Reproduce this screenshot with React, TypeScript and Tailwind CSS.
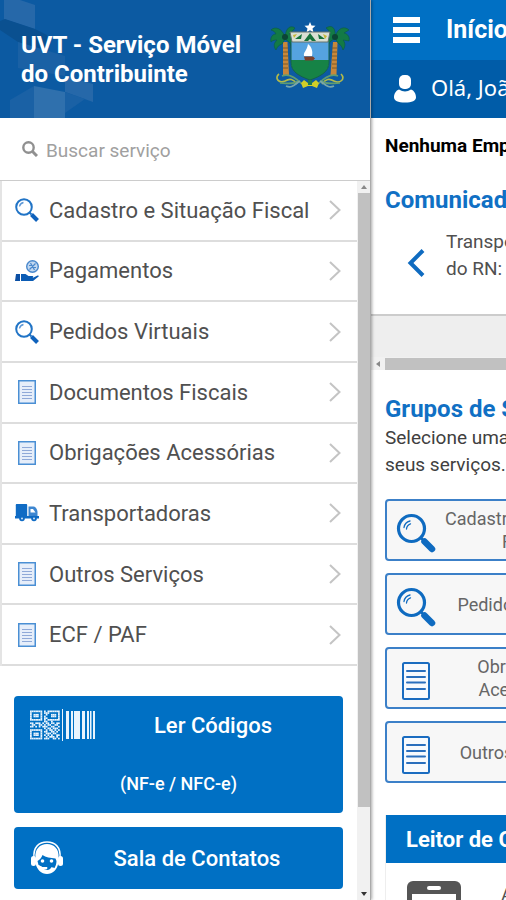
import React from 'react';

type IconProps = { className?: string };

const MagnifierIcon = ({ className }: IconProps) => (
  <svg className={className} viewBox="0 0 40 40" fill="none" aria-hidden="true">
    <circle cx="15.5" cy="15.5" r="13" stroke="#0f6bc0" strokeWidth="3.2" />
    <path d="M8 14.500a8 8 0 0 1 6-6.500M10.500 16a6 6 0 0 1 4-5.200" stroke="#0f6bc0" strokeWidth="1.300" strokeLinecap="round" />
    <path d="M24.500 24.500l3 3" stroke="#0f6bc0" strokeWidth="2.500" />
    <path d="M28.500 28.500l7.500 7.500" stroke="#0f6bc0" strokeWidth="6.500" strokeLinecap="round" />
  </svg>
);

const SmallMagnifierIcon = () => (
  <svg className="size-6" viewBox="0 0 24 24" fill="none" aria-hidden="true">
    <circle cx="9" cy="9" r="7.800" stroke="#2174c6" strokeWidth="2" />
    <path d="M4.500 8.500a5 5 0 0 1 4-4" stroke="#5c97d6" strokeWidth="1.300" />
    <path d="M14.500 14.500l2 2" stroke="#2174c6" strokeWidth="2" />
    <path d="M16.500 16.500l6 6" stroke="#0f62bc" strokeWidth="4" />
  </svg>
);

const DocumentIcon = ({ className }: IconProps) => (
  <svg className={className} viewBox="0 0 28 38" fill="none" aria-hidden="true">
    <rect x="1" y="1" width="26" height="36" rx="1.500" fill="#f8fafd" stroke="#1a6cc0" strokeWidth="2" />
    <path d="M5 9h18M5 15h18M5 20.500h18M5 27h18" stroke="#2a6fbd" strokeWidth="2" strokeLinecap="round" />
  </svg>
);

const SmallDocumentIcon = () => (
  <svg className="h-6 w-[18px]" viewBox="0 0 18 24" fill="none" aria-hidden="true">
    <rect x=".75" y=".75" width="16.500" height="22.500" fill="#e6eefa" stroke="#4a8fd4" strokeWidth="1.500" />
    <path d="M4 6.500h10M4 9.500h10M4 12.500h10M4 15.500h10M4 18.500h10" stroke="#8fa9d8" />
  </svg>
);

const PaymentIcon = () => (
  <svg className="size-6" viewBox="0 0 24 24" fill="none" aria-hidden="true">
    <circle cx="17.500" cy="7.500" r="5.800" fill="#c2d8f0" stroke="#4a88cc" strokeWidth="1.400" />
    <path d="M14.500 10.500l6-6M14 6.500h2.500M18.500 8.500H21M15.500 4l4 7" stroke="#4a88cc" strokeWidth="1.200" />
    <path d="M1 15h4v7H0z" fill="#0b4fa4" />
    <path d="M6 15h4.500l3 2h4c1 0 1 1.700 0 1.700h-4.500 5l4.500-2.200c1.300-.4 1.700.6.800 1.300L18 22H6z" fill="#0b5cb4" />
  </svg>
);

const TruckIcon = () => (
  <svg className="h-[18px] w-6" viewBox="0 0 24 18" aria-hidden="true">
    <path d="M1.500 0H11c.8 0 1.200.4 1.200 1.200V13H.8V1.200C.8.4 1 0 1.500 0z" fill="#0f6bc4" />
    <path d="M13.500 2.500h5c2 0 4 3 4 5.500v6h-9z" fill="#3d86d0" />
    <path d="M15.500 5h2.500l2.500 3.500h-5z" fill="#fff" />
    <path d="M0 12h24v2.500H0z" fill="#0f6bc4" />
    <circle cx="7" cy="14.500" r="2.800" fill="#0f6bc4" />
    <circle cx="19" cy="14.500" r="2.800" fill="#0f6bc4" />
    <circle cx="7" cy="14.500" r="1" fill="#cfe1f5" />
    <circle cx="19" cy="14.500" r="1" fill="#cfe1f5" />
  </svg>
);

const ChevronRight = () => (
  <svg className="h-5 w-3" viewBox="0 0 12 20" fill="none" aria-hidden="true">
    <path d="M1 1l9.500 9L1 19" stroke="#c4c4c4" strokeWidth="2" />
  </svg>
);

const SearchIcon = ({ className }: IconProps) => (
  <svg className={className} viewBox="0 0 16 16" fill="none" aria-hidden="true">
    <circle cx="6.500" cy="6.500" r="5.200" stroke="#909090" strokeWidth="2.400" />
    <path d="M10.500 10.500l4.500 4.500" stroke="#909090" strokeWidth="3" />
  </svg>
);

const Crest = ({ className }: IconProps) => (
  <svg className={className} viewBox="0 0 80 70" aria-hidden="true">
    <path d="M40 0l1.500 3.500 4 .2-3 2.700 1 4.100-3.500-2.200-3.500 2.200 1-4.100-3-2.700 4-.2z" fill="#fff" />
    <path d="M13 20h4.500l1.500 33h-6z" fill="#c8873a" />
    <path d="M63 20h4.500l-1 33h-6z" fill="#c8873a" />
    <path d="M13 26h5M13 30h5M13 34h5M13 38h5M13 42h5M13 46h5M62 26h5M62 30h5M62 34h5M62 38h5M62 42h5M62 46h5" stroke="#7a5a2c" />
    <g fill="#137a45" stroke="#0c5a45" strokeWidth=".6">
      <path d="M15 15C12 6 5 4 1 8c3 1 4 2 5 4-4 0-6 4-5 8 2-2 4-2 6-2-3 3-4 6-1 10 1-3 3-5 6-6l3-5 4 3c2 2 2 4 2 6 4-2 4-6 1-9l5-1c0-4-4-6-8-4 2-2 4-3 6-6-4-3-9-1-10 9z" />
      <path d="M65 15c1-9-3-13-9-9 2 1 3 3 4 5-4-1-8 1-9 5l6 1c-3 3-3 7 0 9 1-3 2-5 4-7l4-3 3 5c3 2 4 4 5 7 3-4 2-8 0-10l6 1c1-4-1-7-5-8l5-3c-4-4-11-3-14 7z" />
    </g>
    <circle cx="15" cy="15" r="3" fill="#0b4535" />
    <circle cx="65" cy="15" r="3" fill="#0b4535" />
    <path d="M21 20h38v20c0 10-8 13-19 17-11-4-19-7-19-17z" fill="#55a3e0" />
    <path d="M21 38h38v2c0 10-8 14-19 18-11-4-19-8-19-18z" fill="#168346" />
    <path d="M21 20v20c0 10 8 14 19 18 11-4 19-8 19-18V20" fill="none" stroke="#14604b" />
    <path d="M20 10h40l-2 10H22z" fill="#d9dfd3" stroke="#65736f" />
    <path d="M40 11l6 8h-4l-2-2-2 2h-4zM25 17l7-5-1 5zM48 12l7 5h-6z" fill="#16723b" />
    <path d="M23 13l4-1-3 4zM53 12l4 2-2 3z" fill="#c7b738" />
    <path d="M38 22c4 3 5 8 4 12h-8c-1-4 3-5 4-12z" fill="#fff" />
    <path d="M34 34.500h9l2 2-2 2h-8z" fill="#7d3f2a" />
    <g fill="none" strokeWidth="1.700">
      <path d="M9 52c-5 4 0 10 6 7 5-3 8-2 12 3M71 52c5 5-1 10-7 7-5-3-8-2-12 3" stroke="#b2b94a" />
      <path d="M12 54c7-3 14 2 20 8M68 54c-7-3-14 2-20 8M10 61c8 0 13 2 18-2M70 61c-8 0-13 2-18-2" stroke="#609c72" />
      <path d="M16 64c6 3 9-2 14-5M64 64c-6 3-9-2-14-5" stroke="#79a5a9" />
    </g>
    <path d="M31 61l3-3 4 3h4l4-3 3 3-2 5-5-2h-4l-5 2z" fill="#d1cf28" />
    <path d="M38 58h4v5h-4z" fill="#1c7b52" />
  </svg>
);

const qrRows = [
  '11111110101111111',
  '10000010111000001',
  '10111010010011101',
  '10111010100011101',
  '10000010110000001',
  '11111110101111111',
  '00000000110010000',
  '11011101011011011',
  '01100110101100110',
  '11010101110011001',
  '00000000101101110',
  '11111110010110101',
  '10000010110011010',
  '10111010011101100',
  '10111010101010011',
  '10000010010111010',
  '11111110111001101',
];

const CodesIcon = ({ className }: IconProps) => (
  <svg className={className} viewBox="0 0 66 32" fill="#eaf4fd" aria-hidden="true">
    {qrRows.map((row, y) =>
      row.split('').map((cell, x) =>
        cell === '1' ? <rect key={`${x}-${y}`} x={x * 1.75} y={y * 1.7 + 1.5} width="1.750" height="1.700" /> : null
      )
    )}
    <path d="M32 0h1v32h-1zM36 2h3v28h-3zM41 2h2v28h-2zM44 2h6v28h-6zM52 2h3v28h-3zM57 2h2v28h-2zM60 2h1.500v28H60zM63 2h2v28h-2z" />
  </svg>
);

const AgentIcon = ({ className }: IconProps) => (
  <svg className={className} viewBox="0 0 34 34" aria-hidden="true">
    <path d="M4 17C3 6 9 1 17 1s14 5 13 16" fill="none" stroke="#fff" strokeWidth="1.500" />
    <path d="M5.500 17C4.500 8 10 3 17 3s12.500 5 11.500 14v4c-1 8-6 12-11.500 12S6.500 29 5.500 21z" fill="#fff" />
    <path d="M7.500 20c2-1 4-3 5-6 3 2.500 8 3 13 3.500l1 2.500c0 3-1 5-2 7-2-1-4-1-5-1h-7l-4-2z" fill="#0070c4" />
    <rect x="1" y="15" width="5" height="10" rx="2.500" fill="#fff" />
    <rect x="28" y="15" width="5" height="10" rx="2.500" fill="#fff" />
    <circle cx="12.500" cy="20" r="1.800" fill="#fff" />
    <circle cx="21.500" cy="20" r="1.800" fill="#fff" />
    <path d="M12 24.500h10c-1 3-2.500 4.500-5 4.500s-4-1.500-5-4.500z" fill="#0070c4" />
    <path d="M6 23l6 3h5c1 1 0 2.500-1 2.500h-4L7 26z" fill="#fff" />
  </svg>
);

const UserIcon = ({ className }: IconProps) => (
  <svg className={className} viewBox="0 0 22 28" fill="#fff" aria-hidden="true">
    <rect x="5" y="0" width="12" height="14" rx="5" />
    <path d="M5 14.500c4 2.500 8 2.500 12 0 3 1 5 4 5 8 0 3-4 5-11 5s-11-2-11-5c0-4 2-7 5-8z" />
  </svg>
);

const PhoneIcon = ({ className }: IconProps) => (
  <svg className={className} viewBox="0 0 54 96" aria-hidden="true">
    <rect width="54" height="96" rx="6" fill="#555" />
    <rect x="5" y="13" width="44" height="68" fill="#fff" />
    <rect x="20" y="5" width="14" height="4" rx="2" fill="#fff" />
  </svg>
);

const services = [
  { name: 'Cadastro e Situação Fiscal', icon: <SmallMagnifierIcon /> },
  { name: 'Pagamentos', icon: <PaymentIcon /> },
  { name: 'Pedidos Virtuais', icon: <SmallMagnifierIcon /> },
  { name: 'Documentos Fiscais', icon: <SmallDocumentIcon /> },
  { name: 'Obrigações Acessórias', icon: <SmallDocumentIcon /> },
  { name: 'Transportadoras', icon: <TruckIcon /> },
  { name: 'Outros Serviços', icon: <SmallDocumentIcon /> },
  { name: 'ECF / PAF', icon: <SmallDocumentIcon /> },
];

const groups = [
  { lines: ['Cadastro e Situação', 'Fiscal'], icon: <MagnifierIcon className="size-10" /> },
  { lines: ['Pedidos Virtuais'], icon: <MagnifierIcon className="size-10" /> },
  { lines: ['Obrigações', 'Acessórias'], icon: <DocumentIcon className="h-[38px] w-7" /> },
  { lines: ['Outros Serviços'], icon: <DocumentIcon className="h-[38px] w-7" /> },
];

const Sidebar = () => (
  <aside className="relative z-10 flex w-[371px] shrink-0 flex-col border-r border-[#aaa] bg-white shadow-[1px_0_3px_rgba(0,0,0,0.35)]">
    <header className="relative flex h-[118px] shrink-0 items-center justify-between bg-[#0c5aa2] pr-5 pl-[21px]">
      <svg className="absolute top-0 left-0 h-[118px] w-24" viewBox="0 0 96 118" aria-hidden="true">
        <path d="M4 0h16l15 5v24L4 19z" fill="#2668a9" />
        <path d="M0 21l5-2 30 10 12 6v16L18 42 0 30z" fill="#0a5090" />
        <path d="M18 42l47 14v20l-47-8z" fill="#1a61a5" />
        <path d="M65 76l28 8v18l-28-10z" fill="#2668a9" />
        <path d="M10 100l24-14v32H10z" fill="#1a61a5" />
        <path d="M34 86l31 6v26H34z" fill="#2f70ad" />
        <path d="M65 92l20 7-20 14z" fill="#1a61a5" />
      </svg>
      <h1 className="relative pt-[2px] text-2xl leading-[29px] font-bold text-white">
        UVT - Serviço Móvel
        <br />
        do Contribuinte
      </h1>
      <Crest className="mb-1 h-[70px] w-20" />
    </header>

    <label className="flex h-[63px] shrink-0 items-center gap-2 border-b border-[#ccc] px-[22px]">
      <SearchIcon className="size-4" />
      <input
        type="search"
        aria-label="Buscar serviço"
        placeholder="Buscar serviço"
        className="min-w-0 flex-1 bg-transparent pt-1 text-[19px] outline-none placeholder:text-[#a0a0a0]"
      />
    </label>

    <div className="flex min-h-0 flex-1">
      <div className="min-w-0 flex-1">
        <nav className="grid h-[485px] grid-rows-8 border-l-2 border-[#e4e4e4]">
          {services.map((service) => (
            <a
              key={service.name}
              href="#"
              className="flex items-center border-b-2 border-[#ddd] pr-4 pl-[13px] text-[22px] text-[#505050]"
            >
              <span className="flex w-6 justify-center">{service.icon}</span>
              <span className="ml-[10px] flex-1 whitespace-nowrap">{service.name}</span>
              <ChevronRight />
            </a>
          ))}
        </nav>
        <div className="flex flex-col gap-[14px] px-[14px] pt-[30px]">
          <button className="h-[117px] rounded bg-[#0070c4] font-medium text-white">
            <span className="flex h-[58px] items-center pl-4">
              <CodesIcon className="h-8 w-[66px]" />
              <span className="flex-1 pr-[13px] text-[22px]">Ler Códigos</span>
            </span>
            <span className="flex h-[59px] items-center justify-center text-lg">(NF-e / NFC-e)</span>
          </button>
          <button className="flex h-[62px] items-center rounded bg-[#0070c4] pl-4 font-medium text-white">
            <AgentIcon className="size-[34px]" />
            <span className="flex-1 pr-[13px] text-[22px]">Sala de Contatos</span>
          </button>
        </div>
      </div>
      <div className="flex w-[13px] flex-col items-center bg-[#f1f1f1]">
        <span className="mt-1 mb-1 border-x-[3px] border-b-4 border-x-transparent border-b-[#888]" />
        <div className="w-3 flex-1 bg-[#c1c1c1]" />
        <span className="mt-[85px] mb-1 border-x-[3px] border-t-4 border-x-transparent border-t-[#333]" />
      </div>
    </div>
  </aside>
);

const Home = () => (
  <main className="min-w-0 flex-1 overflow-hidden whitespace-nowrap">
    <header className="text-white">
      <div className="flex h-[60px] items-center gap-[26px] bg-[#0070c4] pl-[22px]">
        <button aria-label="Menu" className="flex w-[27px] shrink-0 flex-col gap-1">
          <span className="h-[6px] w-full bg-white" />
          <span className="h-[6px] w-full bg-white" />
          <span className="h-[6px] w-full bg-white" />
        </button>
        <h2 className="text-[25px] font-bold">Início</h2>
      </div>
      <div className="flex h-[58px] items-center gap-[15px] bg-[#005ca8] pl-[23px] text-[22px]">
        <UserIcon className="h-7 w-[22px] shrink-0" />
        <span className="pb-1 font-['Noto_Sans']">Olá, João</span>
      </div>
    </header>

    <section className="h-[198px] border-b-2 border-[#ccc] pt-[14px] pl-[14px]">
      <p className="text-[19px] leading-7 font-bold text-black">Nenhuma Empresa</p>
      <h2 className="mt-6 text-2xl font-bold text-[#1070c4]">Comunicados</h2>
      <div className="mt-3 flex items-center gap-[21px] pl-[22px]">
        <button aria-label="Anterior" className="pt-4">
          <svg className="h-7 w-[18px]" viewBox="0 0 18 28" fill="none">
            <path d="M16 1.500L3.500 14 16 26.500" stroke="#0f6bc0" strokeWidth="4" />
          </svg>
        </button>
        <p className="text-[19px] leading-[27px] text-[#505050]">
          Transportadoras
          <br />
          do RN:
        </p>
      </div>
    </section>

    <div className="h-[54px] bg-[#eee] pt-[41px]">
      <div className="flex h-[13px] items-center bg-[#f1f1f1]">
        <span className="mx-[5px] border-y-[3px] border-r-4 border-y-transparent border-r-[#888]" />
        <div className="h-3 flex-1 bg-[#c1c1c1]" />
      </div>
    </div>

    <section className="pt-6 pl-[14px]">
      <h2 className="text-2xl leading-[30px] font-bold text-[#1070c4]">Grupos de Serviços</h2>
      <p className="text-[19px] leading-[27px] text-[#404040]">
        Selecione uma
        <br />
        seus serviços.
      </p>
      <div className="mt-[21px] flex flex-col gap-3">
        {groups.map((group) => (
          <a
            key={group.lines[0]}
            href="#"
            className="flex h-[62px] w-[218px] items-center rounded border-2 border-[#3c80c8] bg-[#f7f7f7] text-lg leading-[23px] text-[#666]"
          >
            <span className="flex w-[58px] shrink-0 justify-center pt-[5px]">{group.icon}</span>
            <span className="flex-1 text-center">
              {group.lines.map((line) => (
                <span key={line} className="block">
                  {line}
                </span>
              ))}
            </span>
          </a>
        ))}
      </div>

      <div className="mt-8 w-[480px] border-l border-[#eee]">
        <h3 className="flex h-12 items-center bg-[#0070c4] pl-5 text-[22px] font-bold text-white">Leitor de Códigos</h3>
        <div className="flex gap-10 pt-[18px] pl-[21px] text-lg text-[#505050]">
          <PhoneIcon className="h-24 w-[54px] shrink-0" />
          <p>Aponte a câmera</p>
        </div>
      </div>
    </section>
  </main>
);

const App = () => (
  <div className="flex h-screen overflow-hidden bg-white font-[Roboto,sans-serif]">
    <Sidebar />
    <Home />
  </div>
);

export default App;
